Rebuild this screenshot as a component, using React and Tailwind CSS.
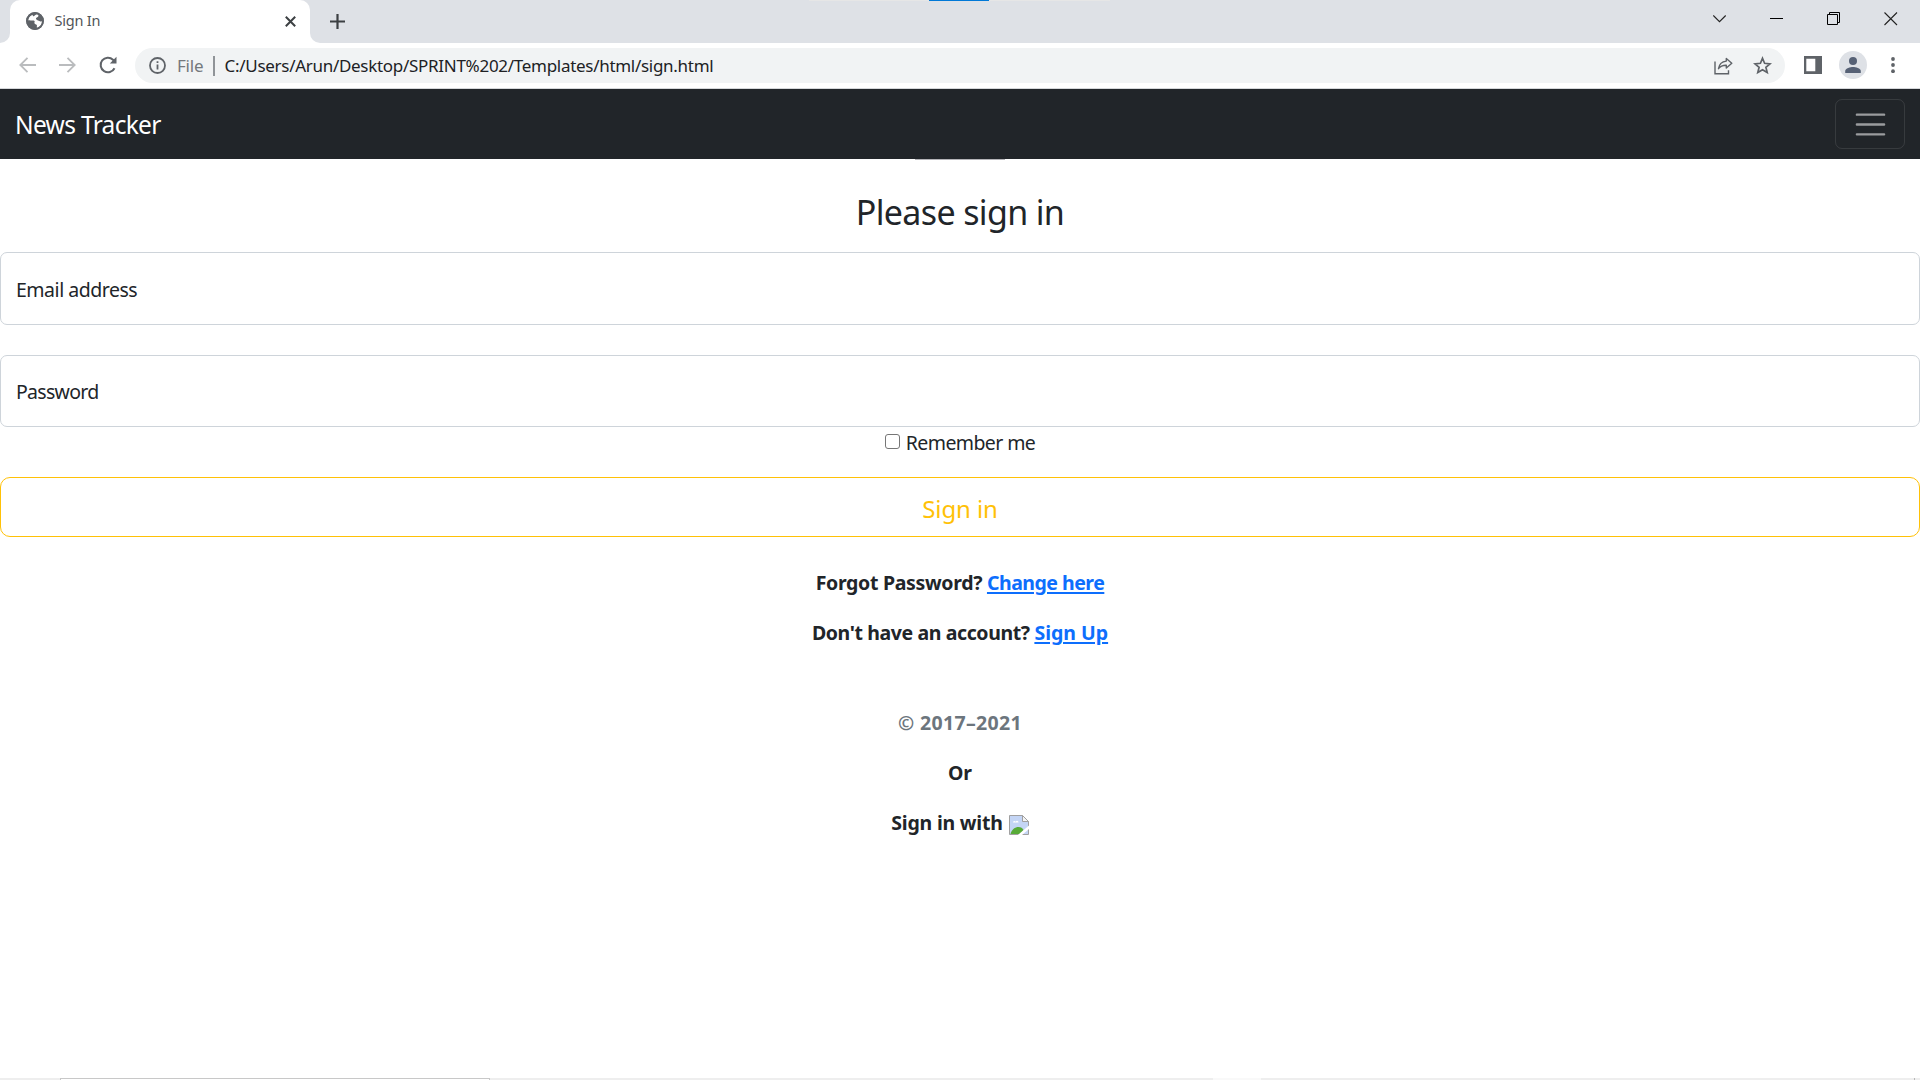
import React from "react";

function Globe() {
  return (
    <svg className="ml-4 size-[18px] shrink-0" viewBox="0 0 18 18">
      <circle cx="9" cy="9" r="8.9" fill="#5f6368" />
      <path
        fill="#fff"
        d="M10.6 2.2C12 2 13 3 12.2 4.6c-.6 1-1.900 1-2.200 1.900-.3 1 .8 1.200 1.400 1.700.8.700 1.800.400 2.500 1.100.6.500 1.400.300 2.100-.1.100 3.200-2 5.900-5 6.700-.6-.8.300-1.900-.2-2.800-.6-.9-2.200-.9-2.400-2.100-.100-.9.600-1.500.1-2.100-.9-.9-2.600-.3-3.900-.5-.8-.1-1.600-.4-2.500-.2C2.300 6.200 4 3.600 6.500 2.700c.4.500.1 1.200.7 1.500 1 .4 2.300-1.800 3.400-2z"
      />
      <circle cx="9" cy="9" r="8" fill="none" stroke="#5f6368" strokeWidth="1.800" />
    </svg>
  );
}

function TabStrip() {
  return (
    <div className="relative flex h-[43px] bg-[#dee1e6]">
      <div className="absolute top-0 left-[809px] h-px w-[301px] bg-[#e6e6e6]" />
      <div className="absolute top-0 left-[929px] h-px w-[60px] bg-[#0078d7]" />
      <div className="flex w-2.5 items-end bg-white">
        <div className="h-full w-full rounded-br-[10px] bg-[#dee1e6]" />
      </div>
      <div className="bg-[#dee1e6]">
        <div className="flex h-full w-[300px] items-center rounded-t-[10px] bg-white pb-[1px]">
          <Globe />
          <span className="ml-[10.500px] text-[14.500px] tracking-[-0.2px] text-[#505458]">Sign In</span>
          <svg className="mr-[14.500px] ml-auto size-[11px]" viewBox="0 0 11 11" stroke="#3c4043" strokeWidth="2">
            <path d="M.8.8l9.400 9.400M10.200.8L.8 10.200" />
          </svg>
        </div>
      </div>
      <div className="flex grow bg-white">
        <div className="flex grow rounded-bl-[10px] bg-[#dee1e6]">
          <svg className="mt-[14px] ml-5 size-[15px]" viewBox="0 0 15 15" stroke="#3c4043" strokeWidth="2.200">
            <path d="M7.500 0v15M0 7.500h15" />
          </svg>
          <div className="mt-3 mr-[22px] ml-auto flex gap-[43px]">
            <svg className="size-[14px]" viewBox="0 0 14 14" fill="none" stroke="#222" strokeWidth="1.100">
              <path d="M.3 3.500l6.200 6.200 6.200-6.200" />
            </svg>
            <svg className="size-[14px]" viewBox="0 0 14 14">
              <path d="M0 6h13v1H0z" />
            </svg>
            <svg className="size-[14px]" viewBox="0 0 14 14" fill="none" stroke="#000">
              <path d="M.5 2.500h10v10H.5zM2.500 2.500v-2h10v10h-2" />
            </svg>
            <svg className="size-[14px]" viewBox="0 0 14 14" stroke="#222" strokeWidth="1.100">
              <path d="M.5.5l12.500 12.500M13 .5L.5 13" />
            </svg>
          </div>
        </div>
      </div>
    </div>
  );
}

function Toolbar() {
  return (
    <div className="flex h-[46px] items-start border-b border-[#d5d7da] bg-white pt-[5px]">
      <svg className="mt-[9px] ml-[19px] h-4 w-[17px]" viewBox="0 0 17 16" fill="none" stroke="#babcbe" strokeWidth="1.800">
        <path d="M17 8H1.500M8.500.8L1.300 8l7.200 7.200" />
      </svg>
      <svg className="mt-[9px] ml-[23px] h-4 w-[17px]" viewBox="0 0 17 16" fill="none" stroke="#babcbe" strokeWidth="1.800">
        <path d="M0 8h15.500M8.500.8L15.700 8l-7.200 7.200" />
      </svg>
      <svg className="mt-2 ml-[23px] size-[18px]" viewBox="0 0 18 18" fill="none">
        <path d="M15.500 12.200A7.300 7.300 0 1 1 14 3.700l1.500 1.500" stroke="#5f6368" strokeWidth="2" />
        <path d="M17.500.8v6.700h-6.700z" fill="#5f6368" />
      </svg>
      <div className="ml-[18px] flex h-[35px] w-[1650px] items-center rounded-full bg-[#f1f3f4] text-[17px]">
        <svg className="ml-[14px] size-[17px]" viewBox="0 0 17 17" fill="none" stroke="#5f6368" strokeWidth="1.800">
          <circle cx="8.500" cy="8.500" r="7.500" />
          <path d="M8.500 7.500v5M8.500 4.200v1.900" />
        </svg>
        <span className="ml-[11px] w-[27px] tracking-[-0.2px] text-[#74787c]">File</span>
        <div className="ml-[9px] h-5 w-[1.500px] bg-[#909498]" />
        <span className="ml-[10px] tracking-[-0.29px] text-[#202124]">C:/Users/Arun/Desktop/SPRINT%202/Templates/html/sign.html</span>
        <svg className="ml-auto h-[18px] w-[19px]" viewBox="0 0 19 18" fill="none" stroke="#5f6368" strokeWidth="1.400">
          <path d="M1 4.500v12.300h13.500v-3.600" />
          <path d="M12.300 1.500l5.500 4.700-5.500 4.800V8.300c-3.500-.1-6 1-7.800 3.400.6-4.300 3.200-7.100 7.800-7.600z" strokeLinejoin="round" />
        </svg>
        <svg className="mr-[13px] ml-5 size-[19px]" viewBox="0 0 19 19" fill="none" stroke="#5f6368" strokeWidth="1.700">
          <path d="M9.500 2.300l2.100 5 5.400.5-4.100 3.500 1.300 5.300-4.700-2.800-4.700 2.800 1.300-5.300L2 7.800l5.400-.5z" />
        </svg>
      </div>
      <svg className="mt-2 ml-[19px] size-[18px]" viewBox="0 0 18 18">
        <path fill="#5f6368" fillRule="evenodd" d="M0 0h18v18H0zM2.300 2.800v12.400h9V2.800z" />
      </svg>
      <svg className="mt-[3px] ml-[17px] size-7" viewBox="0 0 28 28">
        <circle cx="14" cy="14" r="14" fill="#dee1e6" />
        <circle cx="14" cy="10" r="4" fill="#566175" />
        <path fill="#566175" d="M6.200 22v-2c0-2.700 5.200-4 7.800-4s7.800 1.300 7.800 4v2z" />
      </svg>
      <svg className="mt-[9px] ml-[23.500px] h-4 w-1" viewBox="0 0 4 16" fill="#5f6368">
        <circle cx="2" cy="2" r="1.900" />
        <circle cx="2" cy="8" r="1.900" />
        <circle cx="2" cy="14.200" r="1.900" />
      </svg>
    </div>
  );
}

function Navbar() {
  return (
    <nav className="flex h-[70px] items-center justify-between bg-[#212529] px-[15px]">
      <span className="pt-[3px] text-[24.500px] tracking-[-0.68px] text-white">News Tracker</span>
      <button className="flex h-[50px] w-[70px] items-center justify-center rounded-[7px] border border-white/10">
        <svg className="mt-px ml-px h-[37px] w-[37px]" viewBox="0 0 30 30" stroke="rgba(255,255,255,.55)" strokeWidth="2" strokeLinecap="round">
          <path d="M4 7h22M4 15h22M4 23h22" />
        </svg>
      </button>
    </nav>
  );
}

function BrokenImage() {
  return (
    <svg className="ml-[6px] size-5 translate-y-[2px]" viewBox="0 0 20 20">
      <path d="M.5.5h13l6 6v13H.5z" fill="#c4d5f5" stroke="#a0a0a0" />
      <path d="M4 7.500c0-1.500 2-2 2.500-.8C8 5 9.500 6 9.500 7.500z" fill="#fff" />
      <path d="M1.500 19c1-4 4-7 8-7 2.500 0 4 1.200 5 3l-3 4z" fill="#58ab38" />
      <path d="M13.500.5v6h6z" fill="#f4f4f4" stroke="#a0a0a0" />
      <path d="M20 10.500V14l-7 6H8.800z" fill="#fff" />
    </svg>
  );
}

function BottomEdge() {
  return (
    <div className="flex h-0.5 bg-[#eeeeee]">
      <div className="ml-[60px] w-[430px] border-x border-t border-[#c8c8c8] bg-white" />
      <div className="ml-[723px] w-12 bg-[#f9f9f9]" />
      <div className="ml-[653px] w-px bg-[#b8b8b8]" />
    </div>
  );
}

export default function App() {
  return (
    <div className="flex h-[1080px] w-[1920px] flex-col overflow-hidden bg-white font-['Noto_Sans',sans-serif] whitespace-nowrap text-[#212529]">
      <TabStrip />
      <Toolbar />
      <Navbar />
      <main className="flex grow flex-col items-center text-[19.500px] leading-[30px]">
        <div className="h-px w-[90px] bg-[#b4b4b8]" />
        <h1 className="mt-[31px] text-[34px] leading-[42px] tracking-[-0.65px]">Please sign in</h1>
        <div className="mt-[19px] flex h-[73px] w-full items-center rounded-[7px] border border-[#ced4da] px-[15px] pt-0.5 tracking-[-0.48px]">
          Email address
        </div>
        <div className="mt-[30px] flex h-[72px] w-full items-center rounded-[7px] border border-[#ced4da] px-[15px] pt-0.5 tracking-[-0.7px]">
          Password
        </div>
        <label className="mt-[1px] flex h-[30px] items-center tracking-[-0.6px]">
          <input type="checkbox" className="mr-[6px] size-[15px] -translate-y-[2px] appearance-none rounded-[3px] border border-[#767676]" />
          Remember me
        </label>
        <button className="mt-[19px] h-[60px] w-full rounded-[10px] border border-[#ffc107] pt-[3px] text-[24px] tracking-[-0.1px] text-[#ffc107]">
          Sign in
        </button>
        <div className="mt-[31px] flex flex-col items-center gap-5 font-bold">
          <p className="tracking-[-0.32px]">
            Forgot Password? <a className="tracking-[-0.5px] text-[#0d6efd] underline decoration-2 underline-offset-2">Change here</a>
          </p>
          <p className="tracking-[-0.39px]">
            Don't have an account? <a className="tracking-normal text-[#0d6efd] underline decoration-2 underline-offset-2">Sign Up</a>
          </p>
          <p className="mt-10 tracking-[0.35px] text-[#6c757d]">© 2017–2021</p>
          <p>Or</p>
          <p className="flex items-center tracking-[-0.2px]">
            Sign in with
            <BrokenImage />
          </p>
        </div>
      </main>
      <BottomEdge />
    </div>
  );
}
